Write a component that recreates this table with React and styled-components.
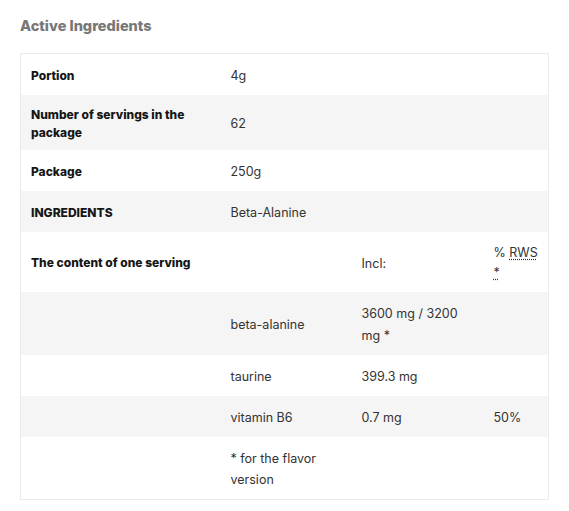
import React from "react";
import styled, { createGlobalStyle } from "styled-components";

const GlobalStyle = createGlobalStyle`
  body {
    margin: 0;
    background: #ffffff;
    font-family: Inter, "Liberation Sans", Arial, sans-serif;
  }
`;

const Wrapper = styled.div`
  padding: 17px 20px 12px 20px;
  width: 528px;
`;

const Title = styled.h3`
  margin: 0 0 18px 0;
  font-size: 14.5px;
  font-weight: 800;
  color: #777777;
  line-height: 18px;
`;

const Table = styled.table`
  width: 528px;
  border-collapse: collapse;
  table-layout: fixed;
  border: 1px solid #ebebeb;
`;

const Row = styled.tr`
  background: ${({ $shaded }) => ($shaded ? "#f5f5f5" : "#ffffff")};
`;

const Label = styled.th`
  text-align: left;
  vertical-align: middle;
  padding: 11px 10px 9px 10px;
  font-size: 12px;
  font-weight: 800;
  line-height: 17.5px;
  color: #161616;
`;

const Cell = styled.td`
  vertical-align: middle;
  padding: 11px 10px 8.5px 10px;
  font-size: 12.5px;
  line-height: 21.5px;
  color: #333333;
`;

const Note = styled.span`
  display: inline-block;
  line-height: 20px;
`;

const Abbr = styled.abbr`
  text-decoration: underline dotted;
  text-underline-offset: 2px;
  cursor: help;
`;

const rows = [
  { label: "Portion", value: "4g" },
  { label: "Number of servings in the package", value: "62" },
  { label: "Package", value: "250g" },
  { label: "INGREDIENTS", value: "Beta-Alanine" },
];

const nutrients = [
  { name: "beta-alanine", amount: "3600 mg / 3200 mg *", rws: "" },
  { name: "taurine", amount: "399.3 mg", rws: "" },
  { name: "vitamin B6", amount: "0.7 mg", rws: "50%" },
];

export default function App() {
  return (
    <>
      <GlobalStyle />
      <Wrapper>
        <Title>Active Ingredients</Title>
        <Table>
          <colgroup>
            <col style={{ width: 200 }} />
            <col style={{ width: 131 }} />
            <col style={{ width: 132 }} />
            <col style={{ width: 65 }} />
          </colgroup>
          <tbody>
            {rows.map((r, i) => (
              <Row key={r.label} $shaded={i % 2 === 1}>
                <Label>{r.label}</Label>
                <Cell colSpan={3}>{r.value}</Cell>
              </Row>
            ))}
            <Row>
              <Label>The content of one serving</Label>
              <Cell></Cell>
              <Cell>Incl:</Cell>
              <Cell>
                <Note>
                  % <Abbr title="Reference Intake">RWS *</Abbr>
                </Note>
              </Cell>
            </Row>
            {nutrients.map((n, i) => (
              <Row key={n.name} $shaded={i % 2 === 0}>
                <Cell></Cell>
                <Cell>{n.name}</Cell>
                <Cell>{n.amount}</Cell>
                <Cell>{n.rws}</Cell>
              </Row>
            ))}
            <Row>
              <Cell></Cell>
              <Cell>* for the flavor version</Cell>
              <Cell></Cell>
              <Cell></Cell>
            </Row>
          </tbody>
        </Table>
      </Wrapper>
    </>
  );
}
